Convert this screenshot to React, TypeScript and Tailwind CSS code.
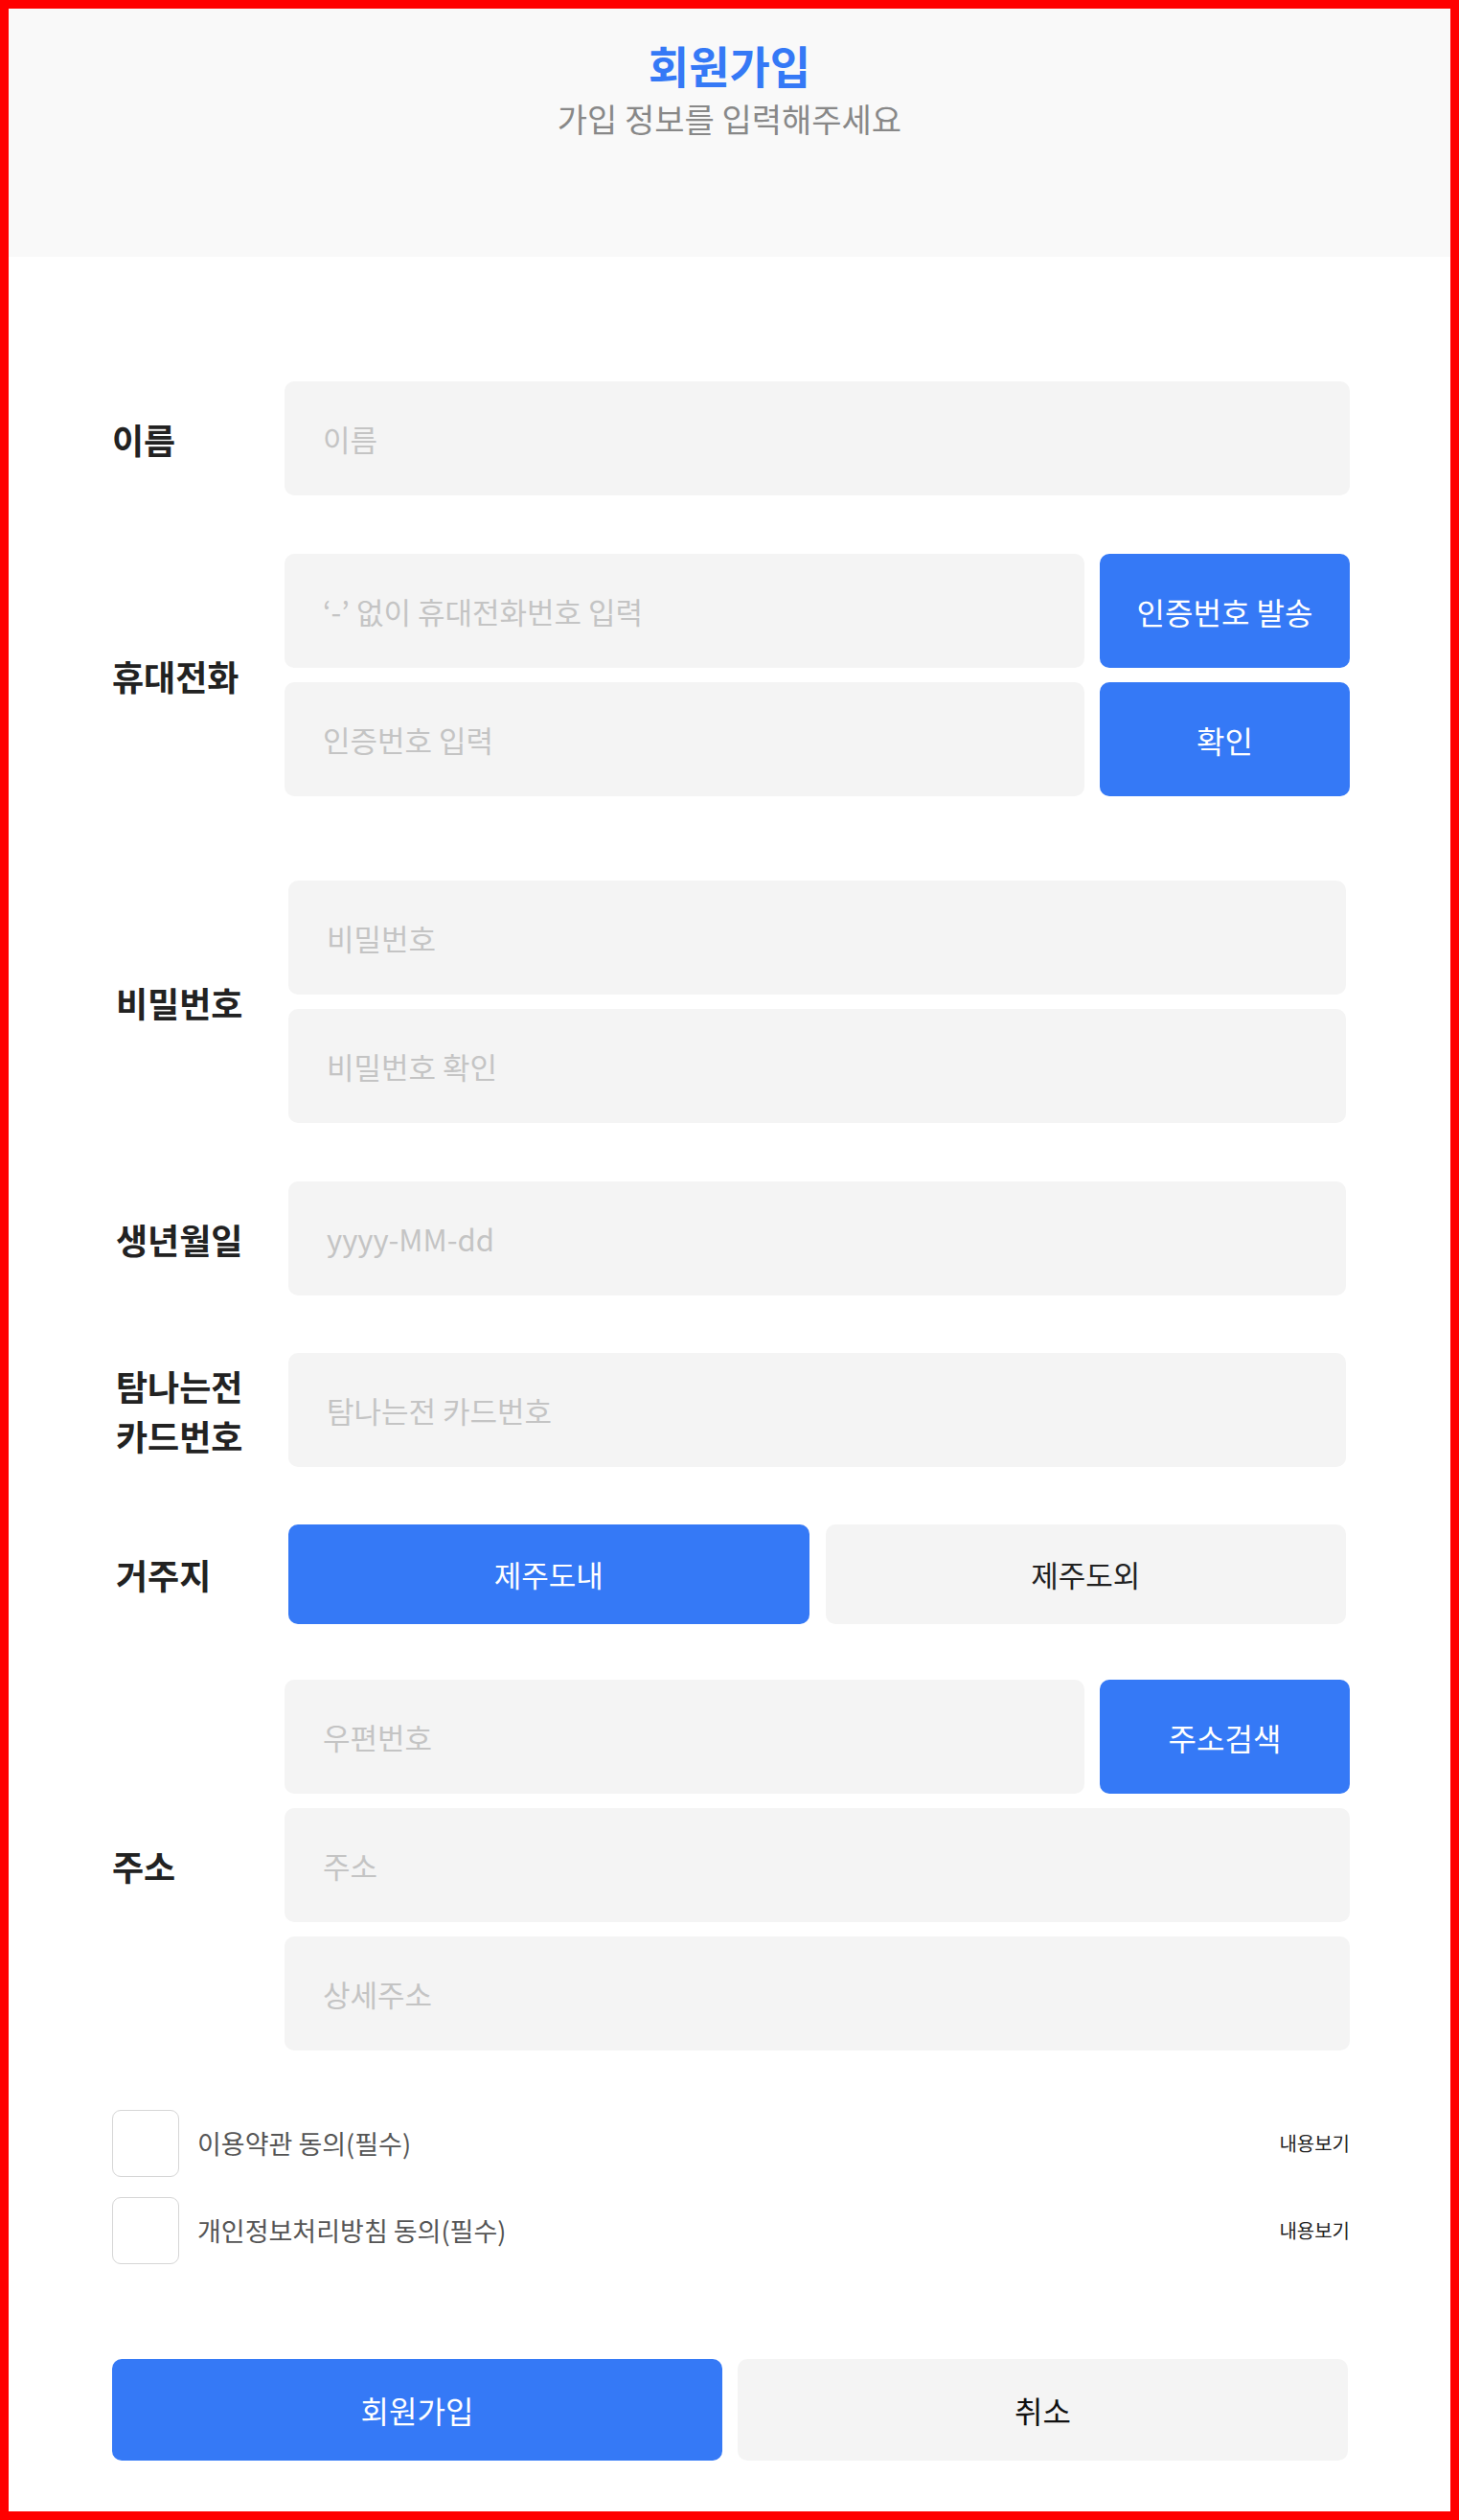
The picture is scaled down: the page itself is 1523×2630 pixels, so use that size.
import React from "react";

const FONT = "font-['Noto_Sans_CJK_KR','Noto_Sans',sans-serif]";

const Field: React.FC<{ placeholder: string; type?: string }> = ({ placeholder, type = "text" }) => (
  <input
    type={type}
    placeholder={placeholder}
    className="h-[119px] w-full min-w-0 rounded-[10px] bg-[#f4f4f4] px-[40px] text-[31px] text-[#222] outline-none placeholder:text-[#c4c4c4]"
  />
);

const BlueButton: React.FC<{ children: React.ReactNode }> = ({ children }) => (
  <button className="h-[119px] w-[261px] shrink-0 rounded-[10px] bg-[#3579f6] text-[32px] text-white">
    {children}
  </button>
);

const Row: React.FC<{ label: React.ReactNode; inset?: boolean; className?: string; children: React.ReactNode }> = ({
  label,
  inset,
  className = "",
  children,
}) => (
  <div className={`flex items-center ${inset ? "px-[4px]" : ""} ${className}`}>
    <div className="w-[180px] shrink-0 text-[36px] font-bold leading-[52px] text-[#222]">{label}</div>
    <div className="flex min-w-0 flex-1 flex-col gap-[15px]">{children}</div>
  </div>
);

const Agree: React.FC<{ text: string }> = ({ text }) => (
  <div className="flex items-center">
    <span className="h-[70px] w-[70px] shrink-0 rounded-[9px] border border-[#d6d6d6] bg-white" />
    <span className="ml-[19px] text-[27px] text-[#555]">{text}</span>
    <span className="ml-auto text-[20px] text-[#222]">내용보기</span>
  </div>
);

export default function App() {
  return (
    <div className={`min-h-screen border-[9px] border-[#ff0000] bg-white ${FONT}`}>
      <header className="h-[259px] bg-[#f9f9f9] pt-[31px] text-center">
        <h1 className="text-[46px] font-bold leading-[54px] text-[#3579f6]">회원가입</h1>
        <p className="mt-[9px] text-[34px] leading-[42px] text-[#888]">가입 정보를 입력해주세요</p>
      </header>

      <form className="flex flex-col pl-[108px] pr-[105px] pb-[52px] pt-[130px]">
        <Row label="이름">
          <Field placeholder="이름" />
        </Row>

        <Row label="휴대전화" className="mt-[61px]">
          <div className="flex gap-[16px]">
            <Field placeholder="‘-’ 없이 휴대전화번호 입력" />
            <BlueButton>인증번호 발송</BlueButton>
          </div>
          <div className="flex gap-[16px]">
            <Field placeholder="인증번호 입력" />
            <BlueButton>확인</BlueButton>
          </div>
        </Row>

        <Row label="비밀번호" inset className="mt-[88px]">
          <Field type="password" placeholder="비밀번호" />
          <Field type="password" placeholder="비밀번호 확인" />
        </Row>

        <Row label="생년월일" inset className="mt-[61px]">
          <Field placeholder="yyyy-MM-dd" />
        </Row>

        <Row
          label={
            <>
              탐나는전
              <br />
              카드번호
            </>
          }
          inset
          className="mt-[60px]"
        >
          <Field placeholder="탐나는전 카드번호" />
        </Row>

        <Row label="거주지" inset className="mt-[60px]">
          <div className="grid grid-cols-2 gap-[17px]">
            <button type="button" className="h-[104px] rounded-[10px] bg-[#3579f6] text-[31px] text-white">
              제주도내
            </button>
            <button type="button" className="h-[104px] rounded-[10px] bg-[#f4f4f4] text-[31px] text-[#222]">
              제주도외
            </button>
          </div>
        </Row>

        <Row label="주소" className="mt-[58px]">
          <div className="flex gap-[16px]">
            <Field placeholder="우편번호" />
            <BlueButton>주소검색</BlueButton>
          </div>
          <Field placeholder="주소" />
          <Field placeholder="상세주소" />
        </Row>

        <div className="mt-[62px] flex flex-col gap-[21px]">
          <Agree text="이용약관 동의(필수)" />
          <Agree text="개인정보처리방침 동의(필수)" />
        </div>

        <div className="mt-[99px] grid grid-cols-2 gap-[16px] pr-[2px]">
          <button type="button" className="h-[106px] rounded-[10px] bg-[#3579f6] text-[32px] text-white">
            회원가입
          </button>
          <button type="button" className="h-[106px] rounded-[10px] bg-[#f4f4f4] text-[32px] text-[#111]">
            취소
          </button>
        </div>
      </form>
    </div>
  );
}
